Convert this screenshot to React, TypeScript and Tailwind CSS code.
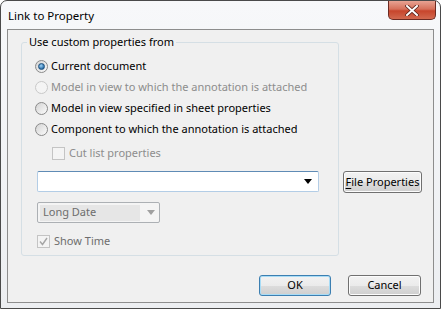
import React from "react";

const font = { fontFamily: '"Noto Sans", "Open Sans", sans-serif' };

function Radio({ checked, disabled }: { checked?: boolean; disabled?: boolean }) {
  return (
    <span
      className={
        "flex h-[13px] w-[13px] shrink-0 items-center justify-center rounded-full border " +
        (disabled
          ? "border-[#c9c9c9] bg-[#f4f4f4]"
          : "border-[#8a8a8a] bg-gradient-to-br from-[#d4d4d4] to-[#fbfbfb]")
      }
    >
      {checked ? (
        <span className="h-[7px] w-[7px] rounded-full border border-[#1d4f7c] bg-[radial-gradient(circle_at_40%_35%,#9fd3f7,#2c6fa8_70%)]" />
      ) : null}
    </span>
  );
}

function Check({ checked, disabled }: { checked?: boolean; disabled?: boolean }) {
  return (
    <span
      className={
        "flex h-[13px] w-[13px] shrink-0 items-center justify-center border " +
        (disabled
          ? "border-[#c4c4c4] bg-[#f4f4f4]"
          : "border-[#8e8f8f] bg-gradient-to-br from-[#dcdcdc] to-[#fbfbfb]")
      }
    >
      {checked ? (
        <svg width="9" height="9" viewBox="0 0 9 9">
          <path d="M1 4.5 L3.5 7.5 L8 1" fill="none" stroke="#a6a6a6" strokeWidth="1.4" />
        </svg>
      ) : null}
    </span>
  );
}

function WinButton({
  children,
  primary,
  className = "",
}: {
  children: React.ReactNode;
  primary?: boolean;
  className?: string;
}) {
  return (
    <button
      type="button"
      className={
        "flex items-center justify-center whitespace-nowrap rounded-[3px] border text-[11px] text-black bg-[linear-gradient(#f2f2f2_0%,#ebebeb_50%,#dddddd_51%,#cfcfcf_100%)] " +
        (primary
          ? "border-[#3c7fb1] shadow-[inset_0_0_0_1px_#a8dcf6]"
          : "border-[#707070] shadow-[inset_0_0_0_1px_#fcfcfc]") +
        " " +
        className
      }
    >
      {children}
    </button>
  );
}

export default function App() {
  return (
    <div className="h-[309px] w-[441px] bg-white" style={font}>
      <div className="flex h-[309px] w-[441px] flex-col rounded-t-[7px] border border-[#4a4a4a] bg-[linear-gradient(#f7f8fa,#eceef1)] text-[11px] text-black">
        <div className="flex h-[28px] items-start justify-between pl-[7px] pr-[4px]">
          <span className="mt-[6px] text-[11.5px] leading-[18px]">Link to Property</span>
          <div className="flex h-[19px] w-[48px] items-center justify-center rounded-b-[5px] border border-t-0 border-[#6b2a22] bg-[linear-gradient(#e8a393_0%,#d6705a_45%,#c7452c_55%,#d2694f_100%)]">
            <svg width="14" height="11" viewBox="0 0 14 11">
              <path
                d="M2 1 L12 10 M12 1 L2 10"
                stroke="#5a2018"
                strokeWidth="3.6"
                strokeLinecap="square"
              />
              <path
                d="M2 1 L12 10 M12 1 L2 10"
                stroke="#ffffff"
                strokeWidth="2"
                strokeLinecap="square"
              />
            </svg>
          </div>
        </div>

        <div className="ml-[6px] flex h-[274px] w-[427px] flex-col border border-[#8d8d8d] bg-[#f0f0f0] pl-[13px] pt-[4px]">
          <div className="flex items-start">
            <fieldset className="h-[222px] w-[318px] rounded-[3px] border border-[#d5dfe5]">
              <legend className="ml-[5px] px-[2px] leading-[16px]">
                Use custom properties from
              </legend>
              <div className="mt-[6px] flex flex-col pl-[13px]">
                <div className="flex h-[21px] items-center gap-[3px]">
                  <Radio checked />
                  <span>Current document</span>
                </div>
                <div className="flex h-[21px] items-center gap-[3px] text-[#8d8d8d]">
                  <Radio disabled />
                  <span>Model in view to which the annotation is attached</span>
                </div>
                <div className="flex h-[21px] items-center gap-[3px]">
                  <Radio />
                  <span>Model in view specified in sheet properties</span>
                </div>
                <div className="flex h-[21px] items-center gap-[3px]">
                  <Radio />
                  <span>Component to which the annotation is attached</span>
                </div>
                <div className="mt-[3px] flex h-[21px] items-center gap-[4px] pl-[17px] text-[#8d8d8d]">
                  <Check disabled />
                  <span>Cut list properties</span>
                </div>
                <div className="mt-[7px] ml-[2px] flex h-[21px] w-[282px] items-center justify-end rounded-[2px] border border-[#b3cde6] border-t-[#5f8bb5] bg-white pr-[6px]">
                  <svg width="8" height="5" viewBox="0 0 8 5">
                    <path d="M0 0 H8 L4 5 Z" fill="#000" />
                  </svg>
                </div>
                <div className="mt-[10px] ml-[2px] flex h-[21px] w-[123px] items-center justify-between rounded-[2px] border border-[#acb0b4] bg-[#f4f4f4] pl-[2px] pr-[4px]">
                  <span className="flex h-[16px] w-[100px] items-center bg-[#e6e6e6] pl-[3px] text-[#6d6d6d]">
                    Long Date
                  </span>
                  <svg width="8" height="5" viewBox="0 0 8 5">
                    <path d="M0 0 H8 L4 5 Z" fill="#a0a0a0" />
                  </svg>
                </div>
                <div className="mt-[11px] ml-[2px] flex h-[15px] items-center gap-[4px] text-[#6d6d6d]">
                  <Check checked disabled />
                  <span>Show Time</span>
                </div>
              </div>
            </fieldset>
            <WinButton className="ml-[4px] mt-[137px] h-[22px] w-[79px]">
              <span>
                <span className="underline underline-offset-2">F</span>ile Properties
              </span>
            </WinButton>
          </div>

          <div className="mt-[19px] flex justify-end gap-[17px] pr-[12px]">
            <WinButton primary className="h-[21px] w-[72px]">
              OK
            </WinButton>
            <WinButton className="h-[21px] w-[73px]">Cancel</WinButton>
          </div>
        </div>
      </div>
    </div>
  );
}
